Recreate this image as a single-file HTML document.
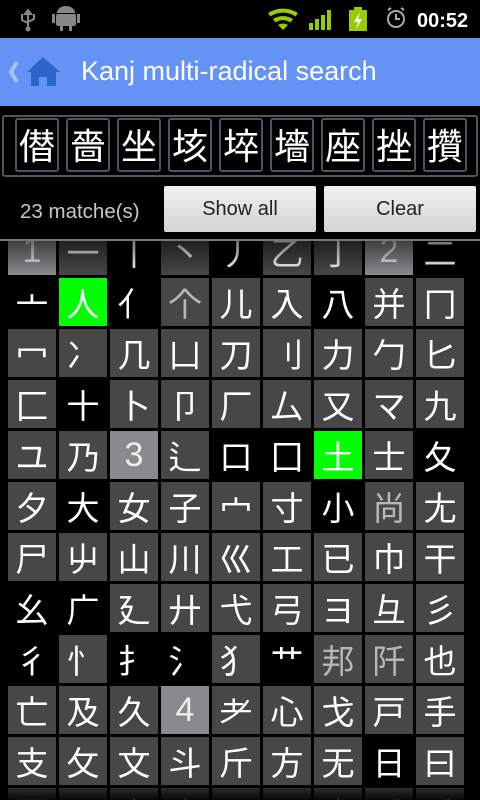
<!DOCTYPE html>
<html><head><meta charset="utf-8"><style>
*{margin:0;padding:0;box-sizing:border-box}
body{width:480px;height:800px;background:#000;overflow:hidden;position:relative;font-family:"Liberation Sans","Noto Sans CJK JP",sans-serif}
.sb{position:absolute;left:0;top:0;width:480px;height:38px;background:#000}
.tb{position:absolute;left:0;top:38px;width:480px;height:68px;background:#6592f5}
.tb .t{position:absolute;left:81px;top:18px;color:#fff;font-size:27px}
.kr{position:absolute;left:2px;top:115px;width:476px;height:62px;border:2px solid #555;border-radius:3px}
.kb{position:absolute;top:118px;width:44px;height:54px;border:2px solid #4a5565;border-radius:3px;color:#fff;font-size:36px;line-height:48px;text-align:center;font-family:"Noto Sans CJK JP",sans-serif}
.mt{position:absolute;left:20px;top:200px;color:#c8c8c8;font-size:20.5px}
.btn{position:absolute;top:186px;height:46px;background:linear-gradient(#f0f0f0,#d4d4d4);border-radius:2px;color:#222;font-size:20px;text-align:center;line-height:46px}
.sep{position:absolute;left:0;top:239px;width:480px;height:2px;background:#777}
.grid{position:absolute;left:0;top:241px;width:480px;height:559px;overflow:hidden}
.c{position:absolute;width:48px;height:48px;color:#fff;font-size:33px;line-height:48px;text-align:center;font-family:"Noto Sans CJK JP",sans-serif}
.G{background:#464746}.B{background:#000}.N{background:#8a898c;font-family:"Liberation Sans",sans-serif;font-size:34px;color:#eee}.E{background:#00ff00}.gr{color:#b8b8b8}
</style></head><body>
<div class="sb">
<svg width="480" height="38">
<g fill="#888"><path d="M28 10v18M28 10l-3 4h6zM22 14v6l6 3M34 14v5l-6 3" stroke="#888" stroke-width="2" fill="none"/><circle cx="28" cy="29" r="2.5"/>
<rect x="56" y="14" width="20" height="12" rx="2"/><path d="M57 13a9 7 0 0 1 18 0z"/><rect x="52" y="14" width="3" height="9"/><rect x="77" y="14" width="3" height="9"/><rect x="60" y="26" width="3" height="5"/><rect x="69" y="26" width="3" height="5"/></g>
<g fill="#9c0"><path d="M268 13a28 28 0 0 1 30 0l-2.5 3.5a22 22 0 0 0-25 0z"/><path d="M273 19a19 19 0 0 1 20 0l-2.5 3.5a13 13 0 0 0-15 0z"/><path d="M278 25a10 10 0 0 1 10 0l-5 5z"/>
<rect x="309" y="23" width="4" height="7"/><rect x="315" y="19" width="4" height="11"/><rect x="321" y="15" width="4" height="15"/><rect x="327" y="10" width="4" height="20"/>
<rect x="349" y="10" width="18" height="21"/><rect x="354" y="7" width="8" height="3"/></g>
<path d="M360 12l-6 10h4l-2 7 6-10h-4z" fill="#fff"/>
<circle cx="396" cy="19" r="8" stroke="#aaa" stroke-width="2" fill="none"/><path d="M396 14v5h4M388 10l3-2M404 10l-3-2" stroke="#aaa" stroke-width="2" fill="none"/>
<text x="417" y="27" fill="#fff" font-size="20" font-weight="bold" font-family="Liberation Sans">00:52</text>
</svg></div>
<div class="tb">
<svg width="70" height="68" style="position:absolute;left:0;top:0"><path d="M17 24l-6 10 6 10" stroke="#a9c0f5" stroke-width="4" fill="none"/><path d="M27 34l16-15 17 15h-4v14H31V34z" fill="#2c64c8"/><rect x="39" y="39" width="8" height="9" fill="#6592f5"/></svg>
<div class="t">Kanj multi-radical search</div></div>
<div class="kr"></div>
<div class="kb" style="left:15px">僣</div><div class="kb" style="left:66px">嗇</div><div class="kb" style="left:117px">坐</div><div class="kb" style="left:168px">垓</div><div class="kb" style="left:219px">埣</div><div class="kb" style="left:270px">墻</div><div class="kb" style="left:321px">座</div><div class="kb" style="left:372px">挫</div><div class="kb" style="left:423px">攢</div>
<div class="mt">23 matche(s)</div>
<div class="btn" style="left:164px;width:152px">Show all</div>
<div class="btn" style="left:324px;width:152px">Clear</div>
<div class="sep"></div>
<div class="grid" id="g"></div>
<script>
var rows=[
"N1 G一 B丨 G丶 B丿 G乙 G亅 N2 B二",
"B亠 E人 B亻 Gg个 G儿 G入 B八 G并 G冂",
"G冖 G冫 G几 G凵 G刀 G刂 G力 G勹 G匕",
"G匚 B十 G卜 G卩 G厂 G厶 G又 Gマ G九",
"Gユ G乃 N3 G辶 B口 B囗 E土 G士 B夂",
"G夕 B大 G女 G子 G宀 G寸 B小 Gg尚 G尢",
"G尸 G屮 G山 G川 G巛 G工 G已 G巾 G干",
"B幺 B广 G廴 G廾 G弋 G弓 Gヨ G彑 G彡",
"B彳 G忄 B扌 B氵 G犭 B艹 Gg邦 Gg阡 G也",
"G亡 G及 G久 N4 G⺹ G心 G戈 G戸 G手",
"G支 G攵 G文 G斗 G斤 G方 G无 B日 G曰",
"G黒 G一 G十 G大 G二 G二 G十 G千 G千"];
var h="";
rows.forEach(function(r,i){r.split(" ").forEach(function(s,j){
var cls=s[0],ch=s.slice(1),ex="";if(ch[0]=="g"&&ch.length>1){ex=" gr";ch=ch.slice(1);}
h+='<div class="c '+cls+ex+'" style="left:'+(8+51*j)+'px;top:'+(-14+51*i)+'px">'+ch+'</div>';});});
document.getElementById("g").innerHTML=h+'<div style="position:absolute;left:0;top:0;width:480px;height:34px;background:linear-gradient(rgba(0,0,0,.55),rgba(0,0,0,0))"></div><div style="position:absolute;left:0;top:545px;width:480px;height:14px;background:linear-gradient(rgba(0,0,0,.3),rgba(0,0,0,.9))"></div>';
</script>
</body></html>
